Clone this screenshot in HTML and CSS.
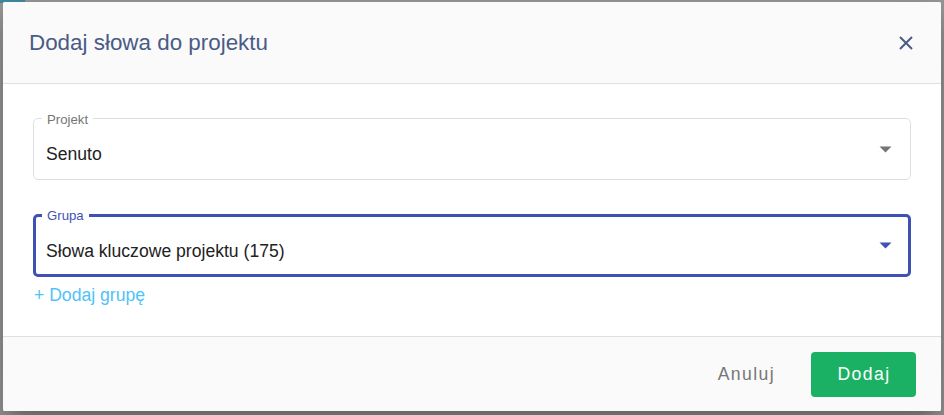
FILE: index.html
```html
<!DOCTYPE html>
<html lang="pl">
<head>
<meta charset="utf-8">
<title>Dodaj słowa do projektu</title>
<link rel="stylesheet" href="styles.css">
</head>
<body>
<div class="page">
  <div class="page-tab"></div>
  <div class="dialog">
    <header class="dlg-head">
      <h2 class="title">Dodaj słowa do projektu</h2>
      <button class="close" aria-label="Zamknij">
        <svg width="14" height="14" viewBox="0 0 14 14"><path d="M1 1 L13 13 M13 1 L1 13" stroke="#4b5b86" stroke-width="2" fill="none"/></svg>
      </button>
    </header>
    <div class="dlg-body">
      <div class="field">
        <span class="label">Projekt</span>
        <span class="value">Senuto</span>
        <svg class="caret" width="13" height="7" viewBox="0 0 13 7"><path d="M0.5 0.5h12l-6 6z" fill="#757575"/></svg>
      </div>
      <div class="field active">
        <span class="label">Grupa</span>
        <span class="value">Słowa kluczowe projektu (175)</span>
        <svg class="caret" width="13" height="7" viewBox="0 0 13 7"><path d="M0.5 0.5h12l-6 6z" fill="#3f51b5"/></svg>
      </div>
      <a class="add-group">+ Dodaj grupę</a>
    </div>
    <footer class="dlg-foot">
      <button class="btn-text">Anuluj</button>
      <button class="btn-primary">Dodaj</button>
    </footer>
  </div>
</div>
</body>
</html>
```
FILE: styles.css
```css
html, body {
  margin: 0;
  padding: 0;
}
body {
  width: 944px;
  height: 415px;
  overflow: hidden;
  background: #9a9a9a;
  font-family: "Liberation Sans", Arial, sans-serif;
}
.page {
  position: relative;
  width: 944px;
  height: 415px;
  padding-top: 2px;
  box-sizing: border-box;
}
.page-tab {
  position: absolute;
  left: 0;
  top: 0;
  width: 25px;
  height: 3px;
  background: #3e8ea6;
}
.dialog {
  position: relative;
  margin-left: 3px;
  width: 938px;
  height: 409px;
  background: #fff;
  border-radius: 2px;
  display: flex;
  flex-direction: column;
  overflow: hidden;
  box-shadow: 0 11px 15px -7px rgba(0,0,0,.2), 0 24px 38px 3px rgba(0,0,0,.14), 0 9px 46px 8px rgba(0,0,0,.12);
}
.dlg-head {
  height: 81px;
  flex: none;
  background: #fafafa;
  border-bottom: 1px solid #e0e0e0;
  display: flex;
  align-items: center;
  justify-content: space-between;
  padding: 0 28px 0 26px;
}
.title {
  margin: 0;
  font-size: 22.4px;
  font-weight: 400;
  color: #4b5b86;
  line-height: 28px;
}
.close {
  border: 0;
  background: none;
  padding: 0;
  width: 14px;
  height: 14px;
  display: flex;
}
.dlg-body {
  flex: 1;
  padding: 34px 30px 0 30px;
}
.field {
  position: relative;
  height: 62px;
  box-sizing: border-box;
  border: 1px solid #dedede;
  border-radius: 5px;
  display: flex;
  align-items: center;
  padding: 0 18px 0 12px;
}
.field.active {
  margin-top: 34px;
  height: 63px;
  border: 3px solid #3f51b5;
  padding: 0 16px 0 10px;
}
.label {
  position: absolute;
  left: 8px;
  top: -7px;
  padding: 0 5px;
  background: #fff;
  font-size: 13.2px;
  line-height: 16px;
  color: #757575;
}
.field.active .label {
  left: 6px;
  top: -9px;
  color: #3f51b5;
}
.value {
  flex: 1;
  padding-top: 10px;
  font-size: 17.6px;
  line-height: 24px;
  color: #222;
}
.caret {
  display: block;
}
.add-group {
  display: inline-block;
  margin: 6px 0 0 1px;
  font-size: 17.6px;
  line-height: 24px;
  color: #4fc3f7;
  cursor: pointer;
}
.dlg-foot {
  height: 74px;
  flex: none;
  background: #fafafa;
  border-top: 1px solid #e0e0e0;
  display: flex;
  align-items: center;
  justify-content: flex-end;
  padding-right: 25px;
}
.btn-text, .btn-primary {
  font-family: "Liberation Sans", Arial, sans-serif;
  font-size: 17.6px;
  font-weight: 400;
  letter-spacing: 1.4px;
  border: 0;
  cursor: pointer;
}
.btn-text {
  background: none;
  color: #777;
  padding: 0 16px;
  margin-right: 20px;
  height: 45px;
}
.btn-primary {
  width: 105px;
  height: 45px;
  background: #1bb164;
  color: #fff;
  border-radius: 4px;
  padding: 0 0 0 1px;
}
```
